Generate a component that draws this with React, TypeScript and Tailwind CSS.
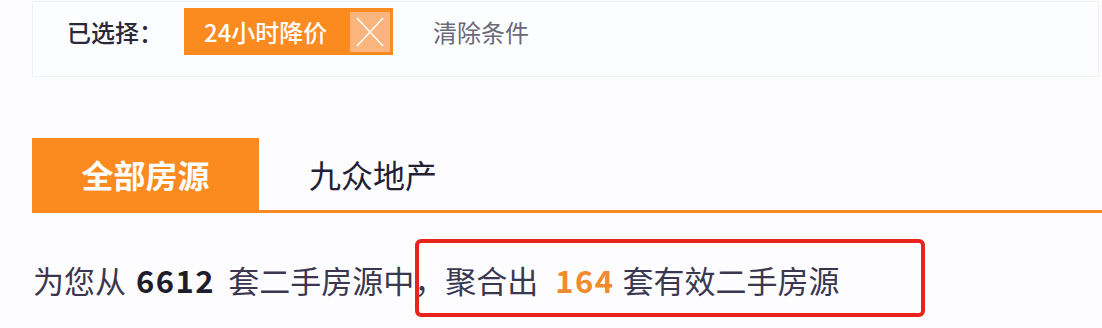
const FONT = { fontFamily: '"Noto Sans CJK SC", "Noto Sans", sans-serif' };

const ORANGE = 'bg-[#fb8a1f]';

function SelectedBar() {
  return (
    <div className="ml-[32px] mr-[3px] mt-[1px] h-[76px] border border-[#f0f2f6] bg-[#fcfdff]">
      <div className="flex items-center h-[47px] mt-[6px] pl-[34px]">
        <span className="text-[24px] leading-none font-medium text-[#2a2838]">已选择：</span>
        <div className={`ml-[21px] flex items-center justify-between w-[209px] h-[47px] pl-[20px] pr-[3px] ${ORANGE}`}>
          <span className="text-[24px] leading-none font-medium text-white">24小时降价</span>
          <span className="flex items-center justify-center w-[40px] h-[40px] mt-[1px] bg-[#f9b57d]">
            <svg width="40" height="40" viewBox="0 0 40 40">
              <path d="M7 6 L33 34 M33 6 L7 34" stroke="#fff" strokeWidth="1.5" fill="none" />
            </svg>
          </span>
        </div>
        <span className="ml-[40px] text-[24px] leading-none text-[#6b6878]">清除条件</span>
      </div>
    </div>
  );
}

function Tabs() {
  return (
    <div className="ml-[32px] mt-[61px] flex items-end border-b-[3px] border-[#f98a1f]">
      <div className={`w-[227px] h-[72px] flex items-center justify-center ${ORANGE}`}>
        <span className="text-[32px] leading-none font-bold text-white">全部房源</span>
      </div>
      <div className="h-[72px] flex items-center ml-[50px]">
        <span className="text-[32px] leading-none text-[#231f35]">九众地产</span>
      </div>
    </div>
  );
}

function Summary() {
  return (
    <div className="relative mt-[46px] h-[40px] pl-[33px] flex items-center text-[31px] leading-none text-[#3b3750] whitespace-nowrap">
      <span>为您从</span>
      <span className="ml-[10px] font-bold tracking-[1.5px] text-[#1f1d2b]">6612</span>
      <span className="ml-[13px]">套二手房源中</span>
      <span>，聚合出</span>
      <span className="ml-[17px] font-bold tracking-[1.5px] text-[#f28a2e]">164</span>
      <span className="ml-[8px]">套有效二手房源</span>
      <div className="absolute left-[415px] top-[-20px] w-[510px] h-[78px] border-[4px] border-[#e8231c] rounded-[6px]" />
    </div>
  );
}

export default function App() {
  return (
    <div className="w-[1102px] h-[328px] bg-[#fdfdff] overflow-hidden" style={FONT}>
      <SelectedBar />
      <Tabs />
      <Summary />
    </div>
  );
}
